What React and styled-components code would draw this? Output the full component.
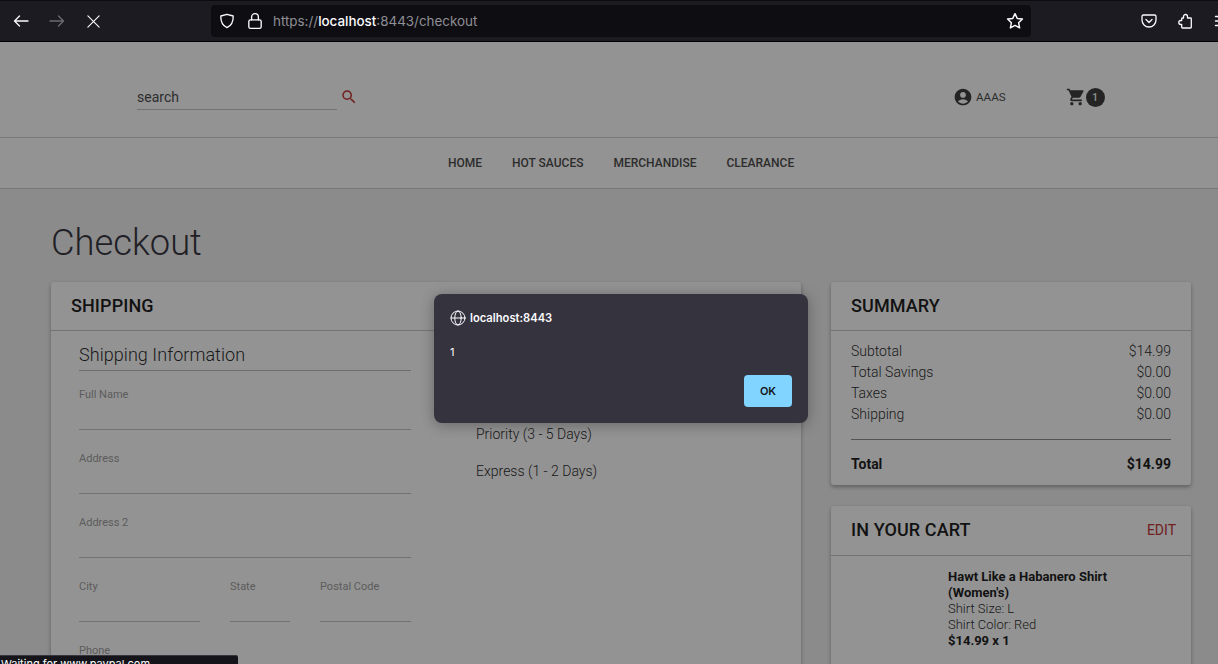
import styled, { createGlobalStyle } from 'styled-components';
import { MdSearch, MdAccountCircle, MdShoppingCart } from 'react-icons/md';

const GlobalStyle = createGlobalStyle`
  html, body {
    margin: 0;
    padding: 0;
    height: 100%;
    overflow: hidden;
    font-family: Roboto, "Liberation Sans", sans-serif;
  }
`;

const Window = styled.div`
  display: flex;
  flex-direction: column;
  width: 100vw;
  height: 100vh;
  overflow: hidden;
`;

const Toolbar = styled.div`
  flex: 0 0 42px;
  box-sizing: border-box;
  display: flex;
  align-items: center;
  background: #1c1b22;
  border-top: 1px solid #0c0c0f;
  border-bottom: 1px solid #000;
  position: relative;
  overflow: hidden;
`;

const ToolButton = styled.div`
  flex: 0 0 ${(p) => p.$w || 36}px;
  height: 32px;
  display: flex;
  align-items: center;
  justify-content: center;
  color: ${(p) => (p.$off ? '#6c6b70' : '#fbfbfe')};
`;

const NavButtons = styled.div`
  display: flex;
  align-items: center;
  padding-left: 3px;
  margin-right: 100px;
`;

const UrlBar = styled.div`
  flex: 0 0 820px;
  height: 32px;
  box-sizing: border-box;
  display: flex;
  align-items: center;
  padding: 0 7px 0 8px;
  background: #0e0d12;
  border-radius: 4px;
  color: #fbfbfe;
`;

const UrlText = styled.div`
  margin-left: -2px;
  font: 400 13.4px Inter, sans-serif;
  color: #8f8f94;
  flex: 1;

  b {
    color: #fbfbfe;
    font-weight: 500;
  }
`;

const ToolRight = styled.div`
  display: flex;
  align-items: center;
  margin-left: 100px;
`;

const Viewport = styled.div`
  position: relative;
  flex: 1;
  overflow: hidden;
  background: #f1f1f1;
`;

const Header = styled.header`
  height: 96px;
  box-sizing: border-box;
  display: flex;
  align-items: center;
  padding: 15px 0 0 137px;
  background: #fff;
  border-bottom: 1px solid #cfcfcf;
  color: #333;
`;

const SearchField = styled.div`
  width: 200px;
  height: 24px;
  margin-top: 1px;
  box-sizing: border-box;
  border-bottom: 1px solid #c0c0c0;
  font-size: 14px;
  line-height: 22px;
  color: #444;
`;

const SearchIcon = styled(MdSearch)`
  font-size: 18px;
  margin: -1px 0 0 3px;
  color: #c22a2a;
`;

const Account = styled.div`
  display: flex;
  align-items: center;
  gap: 3px;
  margin-left: 595px;
  font-size: 11.6px;
  color: #444;
`;

const Cart = styled.div`
  display: flex;
  align-items: center;
  margin-left: 60px;
`;

const Badge = styled.span`
  width: 19px;
  height: 19px;
  border-radius: 50%;
  background: #333;
  color: #fff;
  font-size: 10px;
  font-weight: 500;
  display: flex;
  align-items: center;
  justify-content: center;
`;

const Nav = styled.nav`
  height: 51px;
  box-sizing: border-box;
  display: flex;
  align-items: center;
  gap: 30px;
  padding-left: 448px;
  background: #fff;
  border-bottom: 1px solid #cfcfcf;
`;

const NavItem = styled.a`
  font-size: 12px;
  font-weight: 500;
  color: #444;
`;

const Main = styled.main`
  padding: 0 27px 0 51px;
`;

const Title = styled.h1`
  margin: 0;
  padding-top: 31px;
  height: 62px;
  font-size: 36.3px;
  font-weight: 300;
  line-height: 46px;
  color: #2d2b36;
`;

const Columns = styled.div`
  display: grid;
  grid-template-columns: 750px 360px;
  gap: 30px;
  align-items: start;
`;

const Side = styled.div`
  display: flex;
  flex-direction: column;
  gap: 21px;
`;

const Card = styled.section`
  background: #fff;
  border-radius: 3px;
  box-shadow: 0 2px 4px rgba(0, 0, 0, 0.35);
`;

const CardHead = styled.div`
  height: ${(p) => p.$h || 49}px;
  box-sizing: border-box;
  display: flex;
  align-items: center;
  justify-content: space-between;
  padding: 0 15px 2px 20px;
  border-bottom: 1px solid #c4c4c4;
`;

const CardTitle = styled.h2`
  margin: 0;
  font-size: 18px;
  font-weight: 500;
  letter-spacing: 0.1px;
  color: #111;
`;

const Edit = styled.a`
  font-size: 14px;
  color: #c22a2a;
`;

const ShippingBody = styled.div`
  display: flex;
  height: 400px;
  padding: 11px 0 0 28px;
`;

const FormCol = styled.div`
  width: 332px;
`;

const SectionTitle = styled.h3`
  margin: 0 0 16px;
  height: 28px;
  font-size: 18px;
  font-weight: 300;
  letter-spacing: 0.05px;
  line-height: 26px;
  color: #222;
  border-bottom: 1px solid #bbb;
`;

const Field = styled.div`
  flex: ${(p) => p.$grow || 1};
  height: 42px;
  margin-bottom: 21px;
  border-bottom: 1px solid #c0c0c0;
  font-size: 11px;
  line-height: 16px;
  color: #9a9a9a;
`;

const FieldRow = styled.div`
  display: flex;
  gap: 30px;
`;

const PhoneLabel = styled.div`
  font-size: 11px;
  line-height: 16px;
  color: #9a9a9a;
`;

const MethodCol = styled.div`
  margin-left: 65px;
  padding-top: 84px;
  display: flex;
  flex-direction: column;
  gap: 21px;
`;

const Method = styled.div`
  font-size: 14px;
  font-weight: 300;
  line-height: 16px;
  color: #222;
`;

const SummaryBody = styled.div`
  padding: 10px 20px 0;
  height: 154px;
  box-sizing: border-box;
  color: #222;
`;

const Row = styled.div`
  display: flex;
  justify-content: space-between;
  font-size: 14px;
  line-height: 21px;
  font-weight: ${(p) => (p.$bold ? 700 : 300)};
  color: ${(p) => (p.$bold ? '#111' : '#222')};
`;

const Divider = styled.div`
  height: 1px;
  margin: 14px 0;
  background: #8a8a8a;
`;

const CartBody = styled.div`
  height: 200px;
  padding: 13px 0 0 117px;
  font-size: 13px;
  line-height: 16px;
  font-weight: 300;
  color: #222;
`;

const ItemName = styled.div`
  width: 200px;
  font-weight: 700;
  color: #111;
`;

const ItemPrice = styled.div`
  font-weight: 700;
  color: #111;
`;

const Overlay = styled.div`
  position: absolute;
  inset: 0;
  background: rgba(20, 20, 20, 0.46);
`;

const Dialog = styled.div`
  position: absolute;
  left: 434px;
  top: 252px;
  width: 374px;
  height: 129px;
  box-sizing: border-box;
  padding: 16px;
  background: #35333e;
  border-radius: 8px;
  box-shadow: 0 2px 14px rgba(0, 0, 0, 0.3);
  color: #fbfbfe;
  font-family: Inter, sans-serif;
  display: flex;
  flex-direction: column;
`;

const DialogHost = styled.div`
  display: flex;
  align-items: center;
  gap: 4px;
  height: 16px;
  font-size: 11.2px;
  font-weight: 600;
`;

const DialogMessage = styled.div`
  margin-top: 18px;
  font-size: 11px;
  line-height: 16px;
`;

const DialogActions = styled.div`
  margin-top: auto;
  display: flex;
  justify-content: flex-end;
`;

const OkButton = styled.button`
  width: 48px;
  height: 32px;
  border: 0;
  border-radius: 4px;
  background: #80d4ff;
  color: #15141a;
  font: 600 11px Inter, sans-serif;
`;

const StatusTip = styled.div`
  position: absolute;
  left: 0;
  bottom: 0;
  width: 238px;
  height: 9px;
  overflow: hidden;
  box-sizing: border-box;
  padding: 1px 0 0 1px;
  background: #15141a;
  border-top: 1px solid #37363c;
  border-top-right-radius: 2px;
  color: #fbfbfe;
  font: 400 11px/14px Inter, sans-serif;
`;

const Line = ({ children, size = 16, sw = 1.3 }) => (
  <svg width={size} height={size} viewBox="0 0 16 16" fill="none" stroke="currentColor" strokeWidth={sw} strokeLinecap="round" strokeLinejoin="round">
    {children}
  </svg>
);

export default function App() {
  return (
    <Window>
      <GlobalStyle />
      <Toolbar>
        <NavButtons>
          <ToolButton>
            <Line size={16}><path d="M15 8H1.500M6.500 3 1.500 8l5 5" /></Line>
          </ToolButton>
          <ToolButton $off>
            <Line size={16}><path d="M1 8h13.500M9.500 3l5 5-5 5" /></Line>
          </ToolButton>
          <ToolButton>
            <Line size={15} sw={1.2}><path d="M2 2l12 12M14 2 2 14" /></Line>
          </ToolButton>
        </NavButtons>
        <UrlBar>
          <Line size={16}><path d="M8 1.300 14.200 3c.2 5.500-1.600 9.500-6.200 11.700C3.400 12.500 1.600 8.500 1.800 3z" /></Line>
          <ToolButton $w={40}>
            <Line size={18} sw={1.2}><rect x="2.500" y="7" width="11" height="7.500" rx="1.500" /><path d="M5 7V4.500a3 3 0 0 1 6 0V7" /></Line>
          </ToolButton>
          <UrlText>https://<b>localhost</b>:8443/checkout</UrlText>
          <Line size={18}><path d="M8 1.500l2 4.200 4.600.6-3.400 3.200.9 4.600L8 11.900 3.900 14.100l.9-4.600L1.400 6.300 6 5.700z" /></Line>
        </UrlBar>
        <ToolRight>
          <ToolButton>
            <Line size={16}><path d="M2.500 2h11A1.500 1.500 0 0 1 15 3.500V7A7 7 0 0 1 1 7V3.500A1.500 1.500 0 0 1 2.500 2z" /><path d="M5 6.500 8 9.500l3-3" /></Line>
          </ToolButton>
          <ToolButton>
            <Line size={16} sw={1.3}><path d="M6.500 3.500a2 2 0 0 1 4 0V5h3a.8.8 0 0 1 .8.8v8.400a.8.8 0 0 1-.8.8h-8a.8.8 0 0 1-.8-.8v-2.700h-.9a2 2 0 0 1 0-4h.9V5.800a.8.8 0 0 1 .8-.8h1z" /></Line>
          </ToolButton>
          <ToolButton $w={38}>
            <Line size={16} sw={1.4}><path d="M1.500 3.500h13M1.500 8h13M1.500 12.500h13" /></Line>
          </ToolButton>
        </ToolRight>
      </Toolbar>
      <Viewport>
        <Header>
          <SearchField>search</SearchField>
          <SearchIcon />
          <Account>
            <MdAccountCircle size={20} color="#333" />
            AAAS
          </Account>
          <Cart>
            <MdShoppingCart size={20} color="#333" />
            <Badge>1</Badge>
          </Cart>
        </Header>
        <Nav>
          <NavItem>HOME</NavItem>
          <NavItem>HOT SAUCES</NavItem>
          <NavItem>MERCHANDISE</NavItem>
          <NavItem>CLEARANCE</NavItem>
        </Nav>
        <Main>
          <Title>Checkout</Title>
          <Columns>
            <Card>
              <CardHead>
                <CardTitle>SHIPPING</CardTitle>
              </CardHead>
              <ShippingBody>
                <FormCol>
                  <SectionTitle>Shipping Information</SectionTitle>
                  <Field>Full Name</Field>
                  <Field>Address</Field>
                  <Field>Address 2</Field>
                  <FieldRow>
                    <Field $grow={121}>City</Field>
                    <Field $grow={60}>State</Field>
                    <Field $grow={91}>Postal Code</Field>
                  </FieldRow>
                  <PhoneLabel>Phone</PhoneLabel>
                </FormCol>
                <MethodCol>
                  <Method>Priority (3 - 5 Days)</Method>
                  <Method>Express (1 - 2 Days)</Method>
                </MethodCol>
              </ShippingBody>
            </Card>
            <Side>
              <Card>
                <CardHead>
                  <CardTitle>SUMMARY</CardTitle>
                </CardHead>
                <SummaryBody>
                  <Row><span>Subtotal</span><span>$14.99</span></Row>
                  <Row><span>Total Savings</span><span>$0.00</span></Row>
                  <Row><span>Taxes</span><span>$0.00</span></Row>
                  <Row><span>Shipping</span><span>$0.00</span></Row>
                  <Divider />
                  <Row $bold><span>Total</span><span>$14.99</span></Row>
                </SummaryBody>
              </Card>
              <Card>
                <CardHead $h={50}>
                  <CardTitle>IN YOUR CART</CardTitle>
                  <Edit>EDIT</Edit>
                </CardHead>
                <CartBody>
                  <ItemName>Hawt Like a Habanero Shirt (Women's)</ItemName>
                  <div>Shirt Size: L</div>
                  <div>Shirt Color: Red</div>
                  <ItemPrice>$14.99 x 1</ItemPrice>
                </CartBody>
              </Card>
            </Side>
          </Columns>
        </Main>
        <Overlay />
        <Dialog>
          <DialogHost>
            <Line size={16} sw={1}><circle cx="8" cy="8" r="7" /><ellipse cx="8" cy="8" rx="3.200" ry="7" /><path d="M1 8h14" /></Line>
            localhost:8443
          </DialogHost>
          <DialogMessage>1</DialogMessage>
          <DialogActions>
            <OkButton>OK</OkButton>
          </DialogActions>
        </Dialog>
        <StatusTip>Waiting for www.paypal.com</StatusTip>
      </Viewport>
    </Window>
  );
}
